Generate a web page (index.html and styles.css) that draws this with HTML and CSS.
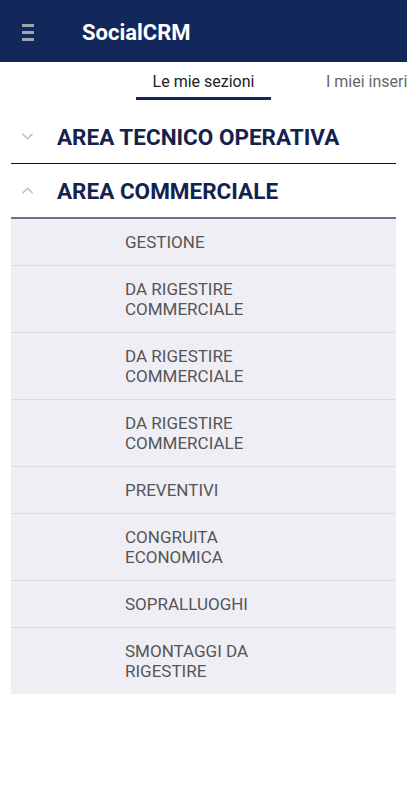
FILE: index.html
```html
<!DOCTYPE html>
<html lang="it">
<head>
    <meta charset="UTF-8">
    <meta name="viewport" content="width=device-width, initial-scale=1.0">
    <title>SocialCRM</title>
    <link rel="stylesheet" href="styles.css">
</head>
<body>

    <div class="topbar">
        <div class="menu-icon">
            <span></span>
            <span></span>
            <span></span>
        </div>
        <div class="app-title">SocialCRM</div>
    </div>

    <div class="tabs">
        <div class="tab active">Le mie sezioni</div>
        <div class="tab second">I miei inserimenti</div>
    </div>

    <div class="sections">
        <div class="section-head">
            <svg class="chev" width="11" height="7" viewBox="0 0 11 7"><path d="M0.5 0.8 L5.5 5.8 L10.5 0.8" fill="none" stroke="#b9b9be" stroke-width="1.3"/></svg>
            <span>AREA TECNICO OPERATIVA</span>
        </div>
        <div class="section-head open">
            <svg class="chev" width="11" height="7" viewBox="0 0 11 7"><path d="M0.5 6.2 L5.5 1.2 L10.5 6.2" fill="none" stroke="#b9b9be" stroke-width="1.3"/></svg>
            <span>AREA COMMERCIALE</span>
        </div>
        <div class="list">
            <div class="item">GESTIONE</div>
            <div class="item">DA RIGESTIRE<br>COMMERCIALE</div>
            <div class="item">DA RIGESTIRE<br>COMMERCIALE</div>
            <div class="item">DA RIGESTIRE<br>COMMERCIALE</div>
            <div class="item">PREVENTIVI</div>
            <div class="item">CONGRUITA<br>ECONOMICA</div>
            <div class="item">SOPRALLUOGHI</div>
            <div class="item">SMONTAGGI DA<br>RIGESTIRE</div>
        </div>
    </div>

</body>
</html>
```

FILE: styles.css
```css
body {
    font-family: Roboto, "Liberation Sans", sans-serif;
    margin: 0;
    background-color: #fff;
}
.topbar {
    height: 62px;
    background-color: #13285a;
    display: flex;
    align-items: center;
}
.menu-icon {
    width: 12px;
    margin-left: 22px;
    display: flex;
    flex-direction: column;
    gap: 4px;
    margin-top: 2px;
}
.menu-icon span {
    display: block;
    height: 3px;
    background-color: #9ea3b2;
}
.app-title {
    margin-left: 48px;
    color: #fff;
    font-size: 22px;
    font-weight: bold;
    margin-top: 2px;
}
.tabs {
    display: flex;
    padding-left: 136px;
    height: 38px;
    overflow: hidden;
    white-space: nowrap;
}
.tab {
    flex-shrink: 0;
    font-size: 16px;
    color: #666;
    padding-top: 10px;
    box-sizing: border-box;
}
.tab.active {
    width: 135px;
    text-align: center;
    color: #222;
    border-bottom: 3px solid #13285a;
}
.tab.second {
    padding-left: 55px;
}
.sections {
    margin: 0 11px;
    padding-top: 10px;
}
.section-head {
    display: flex;
    align-items: center;
    height: 53px;
    border-bottom: 1px solid #111;
    color: #14224d;
    font-size: 22.5px;
    font-weight: bold;
}
.section-head .chev {
    margin-left: 11px;
    margin-right: 24px;
}
.section-head.open {
    border-bottom: 2px solid #6e7282;
}
.list {
    background-color: #efeef5;
}
.item {
    padding: 13px 0 13px 114px;
    font-size: 17px;
    line-height: 20px;
    color: #555;
    border-bottom: 1px solid #dcdbe2;
}
.item:last-child {
    border-bottom: none;
}
```
